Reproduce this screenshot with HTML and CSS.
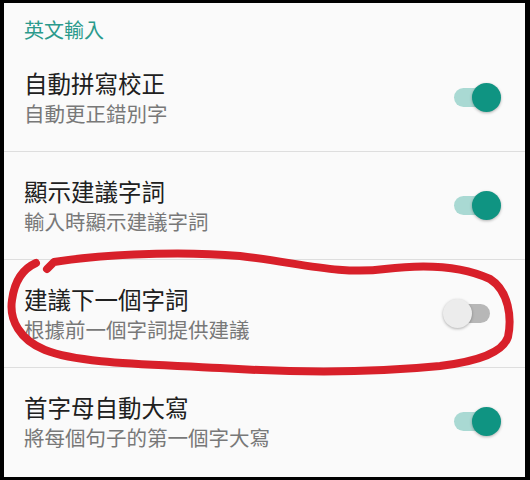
FILE: index.html
```html
<!DOCTYPE html>
<html lang="zh-Hant">
<head>
    <meta charset="UTF-8">
    <meta name="viewport" content="width=device-width, initial-scale=1.0">
    <title>英文輸入</title>
    <link rel="stylesheet" href="styles.css">
</head>
<body>
    <div class="screen">
        <div class="header">英文輸入</div>

        <div class="row">
            <div class="text">
                <div class="title">自動拼寫校正</div>
                <div class="summary">自動更正錯別字</div>
            </div>
            <div class="switch on"><span class="knob"></span></div>
        </div>

        <div class="row">
            <div class="text">
                <div class="title">顯示建議字詞</div>
                <div class="summary">輸入時顯示建議字詞</div>
            </div>
            <div class="switch on"><span class="knob"></span></div>
        </div>

        <div class="row">
            <div class="text">
                <div class="title">建議下一個字詞</div>
                <div class="summary">根據前一個字詞提供建議</div>
            </div>
            <div class="switch"><span class="knob"></span></div>
        </div>

        <div class="row last">
            <div class="text">
                <div class="title">首字母自動大寫</div>
                <div class="summary">將每個句子的第一個字大寫</div>
            </div>
            <div class="switch on"><span class="knob"></span></div>
        </div>
    </div>

    <!-- hand-drawn red circle around the third setting -->
    <svg class="scribble" width="530" height="480" viewBox="0 0 530 480">
        <path d="M47 269 L54 262 C90 256 170 250 240 256 C300 263 340 275 385 269 C425 264 462 266 490 279 C509 291 512 318 508 337 C503 352 480 361 440 366 C380 372 300 373 220 368 C150 364 80 364 45 350 C20 340 9 320 12 300 C14 285 20 270 36 263"
              fill="none" stroke="#d8202a" stroke-width="8" stroke-linecap="round" stroke-linejoin="round"/>
    </svg>
</body>
</html>
```

FILE: styles.css
```css
body {
    margin: 0;
    padding: 3px 5px 3px 4px;
    background: #000;
    position: relative;
    font-family: "Noto Sans CJK TC", "Noto Sans", sans-serif;
}

.screen {
    width: 521px;
    height: 474px;
    background: #fafafa;
    overflow: hidden;
}

.header {
    height: 41px;
    box-sizing: border-box;
    padding: 17px 0 0 20px;
    font-size: 20px;
    line-height: 20px;
    color: #2b9a8c;
}

.row {
    height: 107px;
    display: flex;
    align-items: center;
    justify-content: space-between;
    padding: 0 35px 0 20px;
    border-bottom: 1px solid #dedede;
}

.row.last {
    border-bottom: none;
}

.title {
    font-size: 23.5px;
    line-height: 31px;
    color: #202020;
}

.summary {
    font-size: 20.5px;
    line-height: 28px;
    color: #787878;
}

.switch {
    width: 36px;
    height: 19px;
    border-radius: 10px;
    background: #b7b7b7;
    position: relative;
}

.switch.on {
    background: #a9d9d3;
}

.knob {
    position: absolute;
    top: -5px;
    left: -11px;
    width: 29px;
    height: 29px;
    border-radius: 50%;
    background: #ececec;
    box-shadow: 0 1px 3px rgba(0, 0, 0, 0.3);
}

.switch.on .knob {
    left: 18px;
    background: #0f9482;
}

.scribble {
    position: absolute;
    top: 0;
    left: 0;
    pointer-events: none;
}
```
